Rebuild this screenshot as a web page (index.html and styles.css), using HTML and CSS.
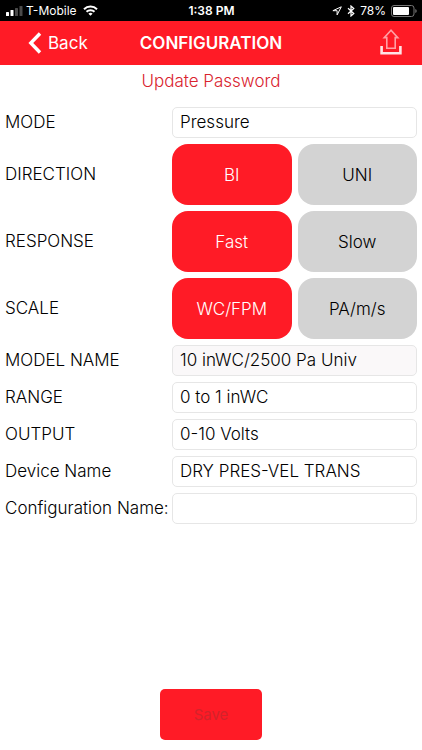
FILE: index.html
```html
<!DOCTYPE html>
<html lang="en">
<head>
    <meta charset="UTF-8">
    <meta name="viewport" content="width=device-width, initial-scale=1.0">
    <title>Configuration</title>
    <link rel="stylesheet" href="styles.css">
</head>
<body>
    <div class="status-bar">
        <div class="status-left">
            <svg class="signal" width="17" height="10" viewBox="0 0 17 10">
                <rect x="0" y="6" width="3" height="4" rx="0.6" fill="#fff"/>
                <rect x="4.5" y="4" width="3" height="6" rx="0.6" fill="#fff"/>
                <rect x="9" y="2" width="3" height="8" rx="0.6" fill="#4a4a4a"/>
                <rect x="13.5" y="0" width="3" height="10" rx="0.6" fill="#4a4a4a"/>
            </svg>
            <span class="carrier">T-Mobile</span>
            <svg class="wifi" width="15" height="11" viewBox="0 0 15 11" fill="none" stroke="#fff" stroke-width="2">
                <path d="M1 4.2a9.2 9.2 0 0 1 13 0"/>
                <path d="M3.5 6.8a5.7 5.7 0 0 1 8 0"/>
                <path d="M7.5 10.8 5.4 8.7a3 3 0 0 1 4.2 0z" fill="#fff" stroke="none"/>
            </svg>
        </div>
        <span class="clock">1:38 PM</span>
        <div class="status-right">
            <svg width="10" height="10" viewBox="0 0 10 10" fill="none" stroke="#fff" stroke-width="1" stroke-linejoin="round">
                <path d="M9.3 0.8 0.9 4.7h4.2v4.2z"/>
            </svg>
            <svg class="bluetooth" width="8" height="12" viewBox="0 0 8 12" fill="none" stroke="#fff" stroke-width="1.2">
                <path d="M1 3.3 6.8 8.5 4 11V1l2.8 2.5L1 8.7"/>
            </svg>
            <span class="percent">78%</span>
            <svg width="26" height="12" viewBox="0 0 26 12">
                <rect x="0.5" y="0.5" width="22.5" height="11" rx="2.5" fill="none" stroke="#777"/>
                <rect x="2" y="2" width="16" height="8" rx="1" fill="#fff"/>
                <path d="M24.3 4v4q1.4-.6 1.4-2t-1.4-2z" fill="#777"/>
            </svg>
        </div>
    </div>

    <header class="nav-bar">
        <button class="back" type="button">
            <svg width="14" height="22" viewBox="0 0 14 22" fill="none" stroke="#fff" stroke-width="3.4">
                <path d="M12 1.5 2.8 11 12 20.5"/>
            </svg>
            Back
        </button>
        <h1 class="title">CONFIGURATION</h1>
        <button class="upload" type="button" aria-label="Upload">
            <svg width="22" height="28" viewBox="0 0 22 28" fill="none">
                <path d="M1.6 17v7.3h18.8V17" stroke="#ffe4e5" stroke-width="2.6"/>
                <path d="M11 1.2 4.2 8.6h2.6v10.6h8.4V8.6h2.6z" stroke="#ffa0a5" stroke-width="1.6"/>
            </svg>
        </button>
    </header>

    <main class="content">
        <a class="update-link" href="#">Update Password</a>

        <form class="config-form">
            <label for="mode">MODE</label>
            <input class="field" id="mode" type="text" value="Pressure">

            <span class="group-label" id="direction">DIRECTION</span>
            <div class="toggle" role="group" aria-labelledby="direction">
                <button class="option active" type="button" aria-pressed="true">BI</button>
                <button class="option" type="button" aria-pressed="false">UNI</button>
            </div>

            <span class="group-label" id="response">RESPONSE</span>
            <div class="toggle" role="group" aria-labelledby="response">
                <button class="option active" type="button" aria-pressed="true">Fast</button>
                <button class="option" type="button" aria-pressed="false">Slow</button>
            </div>

            <span class="group-label" id="scale">SCALE</span>
            <div class="toggle" role="group" aria-labelledby="scale">
                <button class="option active" type="button" aria-pressed="true">WC/FPM</button>
                <button class="option" type="button" aria-pressed="false">PA/m/s</button>
            </div>

            <label for="model">MODEL NAME</label>
            <input class="field readonly" id="model" type="text" value="10 inWC/2500 Pa Univ" readonly>

            <label for="range">RANGE</label>
            <input class="field" id="range" type="text" value="0 to 1 inWC">

            <label for="output">OUTPUT</label>
            <input class="field" id="output" type="text" value="0-10 Volts">

            <label for="device">Device Name</label>
            <input class="field" id="device" type="text" value="DRY PRES-VEL TRANS">

            <label for="config">Configuration Name:</label>
            <input class="field" id="config" type="text">
        </form>

        <button class="save" type="button" disabled>Save</button>
    </main>
</body>
</html>
```
FILE: styles.css
```css
* {
    box-sizing: border-box;
}
body {
    margin: 0;
    min-height: 100vh;
    display: flex;
    flex-direction: column;
    background: #fff;
    color: #000;
    font-family: Inter, "Liberation Sans", sans-serif;
    font-size: 17px;
    font-weight: 300;
    line-height: 20px;
}
button, input {
    font: inherit;
    margin: 0;
}
svg {
    display: block;
}

/* status bar */
.status-bar {
    display: grid;
    grid-template-columns: 1fr auto 1fr;
    align-items: center;
    height: 21px;
    padding: 0 5px 0 6px;
    background: #000;
    color: #fff;
    font-size: 12px;
    font-weight: 400;
}
.status-left, .status-right {
    display: flex;
    align-items: center;
    gap: 5px;
}
.status-left {
    gap: 3px;
}
.wifi {
    margin-left: 3px;
}
.status-right {
    justify-content: flex-end;
}
.clock {
    font-weight: 600;
}

/* red navigation bar */
.nav-bar {
    display: grid;
    grid-template-columns: 1fr auto 1fr;
    align-items: center;
    height: 44px;
    padding: 0 20px;
    background: #ff1b26;
    color: #fff;
}
.title {
    margin: 0;
    font-size: 17px;
    font-weight: 600;
}
.back, .upload {
    display: flex;
    align-items: center;
    gap: 6px;
    padding: 0;
    border: 0;
    background: none;
    color: #fff;
}
.back {
    padding-left: 8px;
    font-weight: 400;
}
.upload {
    justify-self: end;
}

/* page content */
.content {
    flex: 1;
    display: flex;
    flex-direction: column;
    padding: 6px 5px 10px;
}
.update-link {
    align-self: center;
    margin-bottom: 16px;
    color: #d9232e;
    text-decoration: none;
}
.config-form {
    display: grid;
    grid-template-columns: 161px 1fr;
    gap: 6px;
    align-items: center;
}
.config-form label, .group-label {
    padding-bottom: 2px;
    white-space: nowrap;
}
.field {
    width: 100%;
    height: 31px;
    padding: 0 7px 2px;
    border: 1px solid #e6e6e6;
    border-radius: 5px;
    background: #fff;
    color: #000;
}
.field.readonly {
    background: #faf8f9;
}
.toggle {
    display: grid;
    grid-template-columns: 1fr 1fr;
    gap: 6px;
}
.option {
    height: 61px;
    padding: 0;
    border: 0;
    border-radius: 16px;
    background: #d3d3d3;
    color: #000;
}
.option.active {
    background: #ff1b26;
    color: #fff;
}
.save {
    align-self: center;
    width: 102px;
    height: 51px;
    margin-top: auto;
    border: 0;
    border-radius: 5px;
    background: #ff1b26;
    color: #d3232b;
    font-size: 15px;
    font-weight: 400;
}
```
